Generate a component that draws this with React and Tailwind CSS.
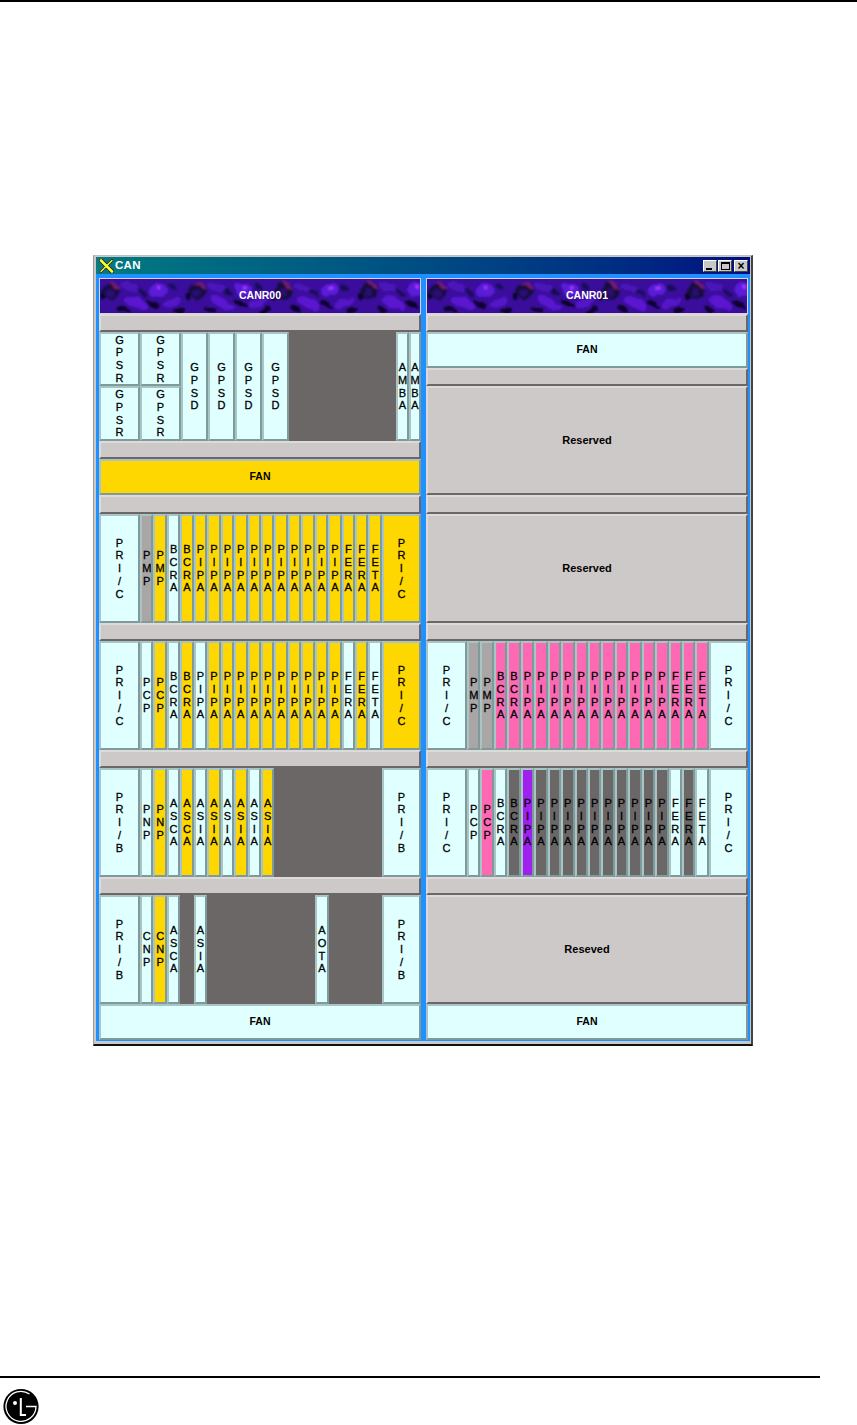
import React from "react";

const C = "bg-[#e0ffff]";
const Y = "bg-[#ffd700]";
const P = "bg-[#ff69b4]";
const G = "bg-[#aaa6a6]";
const D = "bg-[#6b6767]";
const V = "bg-[#a020f0]";

function Slot({ name, color = C, className = "w-[13.44px]" }) {
  return (
    <div className={`${color} ${className} h-full shrink-0 overflow-hidden flex flex-col items-center justify-center border-2 border-t-[#a9c4c4] border-l-[#a9c4c4] border-r-[#7f9a9a] border-b-[#7f9a9a] text-[11px] leading-[12.67px] font-normal [-webkit-text-stroke:0.3px_#000] text-black`}>
      {name.split("").map((c, i) => (
        <span key={i}>{c}</span>
      ))}
    </div>
  );
}

function Pri({ name, color = C, right = false }) {
  return <Slot name={name} color={color} className={right ? "w-[39px]" : "w-[41px]"} />;
}

function Bar({ tall = false }) {
  return <div className={`${tall ? "h-[19px]" : "h-[18px]"} shrink-0 bg-[#cdc9c9] border-2 border-t-[#dedada] border-l-[#dedada] border-r-[#6b6767] border-b-[#6b6767]`} />;
}

function Wide({ text, color = C }) {
  return (
    <div className={`${color} h-[36px] shrink-0 flex items-center justify-center border-2 border-t-[#a9c4c4] border-l-[#a9c4c4] border-r-[#7f9a9a] border-b-[#7f9a9a] text-[10.5px] font-bold text-black`}>
      {text}
    </div>
  );
}

function Reserved({ text }) {
  return (
    <div className="h-[109px] shrink-0 bg-[#cdc9c9] flex items-center justify-center border-2 border-t-[#dedada] border-l-[#dedada] border-r-[#6b6767] border-b-[#6b6767] text-[11px] font-bold text-black pb-px">
      {text}
    </div>
  );
}

function Row({ children }) {
  return <div className="h-[109px] shrink-0 flex bg-[#6b6767]">{children}</div>;
}

function Spacer({ w }) {
  return <div className={`${w} shrink-0`} />;
}

function Header({ name, id }) {
  return (
    <div className="relative h-[36px] shrink-0 overflow-hidden border border-[#d8d4d4] bg-[#3c0ca0] flex items-center justify-center">
      <svg className="absolute inset-0 w-full h-full" aria-hidden="true">
        <defs>
          <pattern id={id + "p"} width="86" height="36" patternUnits="userSpaceOnUse">
            <rect width="86" height="36" fill="#3a0c9c" />
            <ellipse cx="58" cy="11" rx="9" ry="7" fill="#5a1ad8" />
            <ellipse cx="59" cy="9" rx="2" ry="2" fill="#b038ff" />
            <ellipse cx="36" cy="24" rx="12" ry="5" fill="#5a18d0" transform="rotate(25 36 24)" />
            <ellipse cx="72" cy="24" rx="10" ry="4" fill="#5416c8" transform="rotate(-25 72 24)" />
            <ellipse cx="30" cy="8" rx="10" ry="4" fill="#4c12b8" transform="rotate(20 30 8)" />
            <ellipse cx="11" cy="12" rx="9" ry="9" fill="#14083e" />
            <ellipse cx="11" cy="14" rx="4" ry="4" fill="#2a0c74" />
            <path d="M8 3 L15 3 L20 10 L16 10 L12 6 Z" fill="#701c6c" />
            <ellipse cx="3" cy="18" rx="2.5" ry="4" fill="#0c0630" />
            <ellipse cx="54" cy="25" rx="8" ry="3" fill="#0a0428" transform="rotate(25 54 25)" />
            <ellipse cx="24" cy="30" rx="6" ry="3" fill="#0a0428" transform="rotate(20 24 30)" />
            <ellipse cx="42" cy="14" rx="6" ry="2.6" fill="#140850" transform="rotate(30 42 14)" />
            <ellipse cx="80" cy="31" rx="7" ry="3" fill="#0a0428" transform="rotate(-15 80 31)" />
            <ellipse cx="72" cy="9" rx="5" ry="2.6" fill="#180a58" transform="rotate(35 72 9)" />
          </pattern>
          <filter id={id + "f"} x="0" y="0" width="100%" height="100%">
            <feTurbulence type="fractalNoise" baseFrequency="0.09" numOctaves="2" seed="9" result="n" />
            <feDisplacementMap in="SourceGraphic" in2="n" scale="7" xChannelSelector="R" yChannelSelector="G" />
            <feGaussianBlur stdDeviation="1" />
          </filter>
        </defs>
        <rect x="-6" y="-6" width="340" height="48" fill={`url(#${id}p)`} filter={`url(#${id}f)`} />
      </svg>
      <span className="relative text-[10.5px] font-bold text-white">{name}</span>
    </div>
  );
}

function Column({ children }) {
  return <div className="w-[322px] shrink-0 flex flex-col">{children}</div>;
}

function Gpsr() {
  return (
    <div className="w-[41px] shrink-0 flex flex-col">
      <div className="h-[54px]"><Slot name="GPSR" className="w-full" /></div>
      <div className="h-[55px]"><Slot name="GPSR" className="w-full" /></div>
    </div>
  );
}

export default function App() {
  const pipa = (n, color) => Array.from({ length: n }, (_, i) => <Slot key={"p" + i} name="PIPA" color={color} />);
  return (
    <div className="relative w-[857px] h-[1425px] bg-white overflow-hidden font-['Liberation_Sans',Arial,sans-serif]">
      <div className="h-[2px] bg-black" />
      <div className="h-[253px]" />
      <div className="ml-[93px] w-[660px] h-[791px] bg-[#c8c8c8] border-r-2 border-b-2 border-r-[#444] border-b-[#111] border-l border-t border-l-[#9a9a9a] border-t-[#c0c0c0] pl-[2px] pt-[1px] pr-[1px] pb-[3px] flex flex-col">
        <div className="h-[17px] shrink-0 flex items-center justify-between pr-[2px] bg-gradient-to-r from-[#0a7a80] to-[#000a80]">
          <div className="flex items-center gap-px pl-[3px]">
            <svg width="15" height="14" viewBox="0 0 15 14" aria-hidden="true">
              <path d="M2 1.5 L13 12.5" stroke="#222" strokeWidth="4.2" strokeLinecap="round" />
              <path d="M13 1.5 L2 12.5" stroke="#222" strokeWidth="2.6" strokeLinecap="round" />
              <path d="M2 1.5 L13 12.5" stroke="#ffff30" strokeWidth="2.6" strokeLinecap="round" />
              <path d="M13 1.5 L2 12.5" stroke="#ffff30" strokeWidth="1.3" strokeLinecap="round" />
            </svg>
            <span className="text-white text-[11.5px] font-bold tracking-[0.3px]">CAN</span>
          </div>
          <div className="flex items-center">
            {[
              <div key="a" className="w-[6px] h-[2px] bg-black mt-[6px] mr-[3px]" />,
              <div key="b" className="w-[9px] h-[8px] border border-black border-t-2" />,
              <span key="c" className="text-[12px] leading-none text-black font-bold">×</span>,
            ].map((ic, i) => (
              <div key={i} className={`w-[14px] h-[12px] bg-[#c8c8c8] flex items-center justify-center border border-t-white border-l-white border-r-[#444] border-b-[#444] ${i === 2 ? "ml-[2px]" : i === 1 ? "ml-px" : ""}`}>
                {ic}
              </div>
            ))}
          </div>
        </div>
        <div className="flex-1 bg-[#1e90ff] flex gap-[5px] pl-[3px] pt-[4px]">
          <Column>
            <Header name="CANR00" id="h1" />
            <Bar />
            <Row>
              <Gpsr />
              <Gpsr />
              <Slot name="GPSD" className="w-[27px]" />
              <Slot name="GPSD" className="w-[27px]" />
              <Slot name="GPSD" className="w-[27px]" />
              <Slot name="GPSD" className="w-[27px]" />
              <Spacer w="w-[107px]" />
              <Slot name="AMBA" className="w-[13px]" />
              <Slot name="AMBA" className="w-[12px]" />
            </Row>
            <Bar />
            <Wide text="FAN" color={Y} />
            <Bar tall />
            <Row>
              <Pri name="PRI/C" />
              <Slot name="PMP" color={G} />
              <Slot name="PMP" color={Y} />
              <Slot name="BCRA" />
              <Slot name="BCRA" color={Y} />
              {pipa(11, Y)}
              <Slot name="FERA" color={Y} />
              <Slot name="FERA" color={Y} />
              <Slot name="FETA" color={Y} />
              <Pri name="PRI/C" color={Y} right />
            </Row>
            <Bar />
            <Row>
              <Pri name="PRI/C" />
              <Slot name="PCP" />
              <Slot name="PCP" color={Y} />
              <Slot name="BCRA" />
              <Slot name="BCRA" color={Y} />
              <Slot name="PIPA" />
              {pipa(10, Y)}
              <Slot name="FERA" />
              <Slot name="FERA" color={Y} />
              <Slot name="FETA" />
              <Pri name="PRI/C" color={Y} right />
            </Row>
            <Bar />
            <Row>
              <Pri name="PRI/B" />
              <Slot name="PNP" />
              <Slot name="PNP" color={Y} />
              <Slot name="ASCA" />
              <Slot name="ASCA" color={Y} />
              <Slot name="ASIA" />
              <Slot name="ASIA" color={Y} />
              <Slot name="ASIA" />
              <Slot name="ASIA" color={Y} />
              <Slot name="ASIA" />
              <Slot name="ASIA" color={Y} />
              <Spacer w="w-[107.6px]" />
              <Pri name="PRI/B" right />
            </Row>
            <Bar />
            <Row>
              <Pri name="PRI/B" />
              <Slot name="CNP" />
              <Slot name="CNP" color={Y} />
              <Slot name="ASCA" />
              <Spacer w="w-[13.44px]" />
              <Slot name="ASIA" />
              <Spacer w="w-[108px]" />
              <Slot name="AOTA" />
              <Spacer w="w-[53.36px]" />
              <Pri name="PRI/B" right />
            </Row>
            <Wide text="FAN" />
          </Column>
          <Column>
            <Header name="CANR01" id="h2" />
            <Bar />
            <Wide text="FAN" />
            <Bar />
            <Reserved text="Reserved" />
            <Bar tall />
            <Reserved text="Reserved" />
            <Bar />
            <Row>
              <Pri name="PRI/C" />
              <Slot name="PMP" color={G} />
              <Slot name="PMP" color={G} />
              <Slot name="BCRA" color={P} />
              <Slot name="BCRA" color={P} />
              {pipa(11, P)}
              <Slot name="FERA" color={P} />
              <Slot name="FERA" color={P} />
              <Slot name="FETA" color={P} />
              <Pri name="PRI/C" right />
            </Row>
            <Bar />
            <Row>
              <Pri name="PRI/C" />
              <Slot name="PCP" />
              <Slot name="PCP" color={P} />
              <Slot name="BCRA" />
              <Slot name="BCRA" color={D} />
              <Slot name="PIPA" color={V} />
              {pipa(10, D)}
              <Slot name="FERA" />
              <Slot name="FERA" color={D} />
              <Slot name="FETA" />
              <Pri name="PRI/C" right />
            </Row>
            <Bar />
            <Reserved text="Reseved" />
            <Wide text="FAN" />
          </Column>
        </div>
      </div>
      <div className="mt-[330px] w-[820px] h-[2px] bg-black" />
      <div className="ml-[3px] mt-[10px] w-[36px] h-[37px]">
        <svg width="36" height="37" viewBox="0 0 36 36" aria-hidden="true">
          <circle cx="18" cy="18" r="17.6" fill="#000" />
          <path d="M26.5 5.5 A15 15 0 1 0 33 18 H23" fill="none" stroke="#fff" strokeWidth="1.3" />
          <circle cx="12" cy="14.5" r="2" fill="#fff" />
          <path d="M17.8 9.5 V26.5 H23" fill="none" stroke="#fff" strokeWidth="2" />
        </svg>
      </div>
    </div>
  );
}
